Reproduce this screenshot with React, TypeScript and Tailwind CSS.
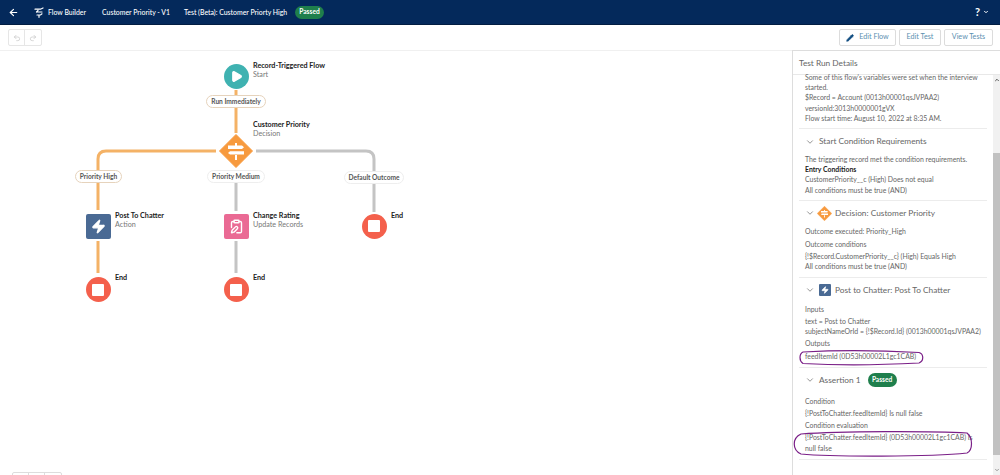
import React from "react";
import { ArrowLeft, Undo2, Redo2, ChevronDown, Pencil, Zap, Play, ClipboardPen, ChevronUp } from "lucide-react";

const Pill = ({ c, t, x, y, w }: { c: string; t: string; x: number; y: number; w: number }) => (
  <div
    className={`absolute h-[13px] rounded-full border bg-white flex items-center justify-center whitespace-nowrap text-[6.6px] font-bold text-[#555] ${c}`}
    style={{ left: x, top: y, width: w }}
  >
    {t}
  </div>
);

const Label = ({ x, y, t, s }: { x: number; y: number; t: string; s?: string }) => (
  <div className="absolute leading-[8.5px]" style={{ left: x, top: y + 1 }}>
    <div className="text-[7.2px] font-bold text-[#222] whitespace-nowrap">{t}</div>
    {s && <div className="text-[7.2px] text-[#777] whitespace-nowrap">{s}</div>}
  </div>
);

const EndNode = ({ x, y }: { x: number; y: number }) => (
  <div
    className="absolute w-[25px] h-[25px] rounded-full bg-[#f4604c] flex items-center justify-center"
    style={{ left: x - 12.5, top: y - 12.5 }}
  >
    <div className="w-[12px] h-[12px] rounded-[1px] bg-white" />
  </div>
);

const Section = ({ icon, title, extra, children }: { icon?: React.ReactNode; title: string; extra?: React.ReactNode; children: React.ReactNode }) => (
  <div className="border-b border-[#ececec]">
    <div className="h-[25px] flex items-center pl-[6px] gap-[3px]">
      <ChevronDown size={10} strokeWidth={1.5} className="text-[#555] shrink-0" />
      {icon}
      <span className="text-[8.3px] text-[#666] ml-[1px] whitespace-nowrap">{title}</span>
      {extra}
    </div>
    <div className="pl-[6px] pb-[5px]">{children}</div>
  </div>
);

const L = ({ children, b, mt }: { children: React.ReactNode; b?: boolean; mt?: string }) => (
  <div className={`leading-[10.2px] whitespace-nowrap ${b ? "font-bold text-[#222]" : ""} ${mt ?? ""}`}>{children}</div>
);

const PassedPill = () => (
  <span className="h-[14px] w-[29px] rounded-full bg-[#1f7f4c] text-white text-[6.6px] font-bold flex items-center justify-center shrink-0">
    Passed
  </span>
);

const DecisionIcon = ({ s }: { s: number }) => (
  <svg width={s} height={s} viewBox="0 0 34 34" className="shrink-0">
    <path d="M17 0.5 L33.5 17 L17 33.5 L0.5 17 Z" fill="#f79a3e" stroke="#f79a3e" strokeLinejoin="round" strokeWidth="1" />
    <path d="M9 11.5h14l2 1.7-2 1.7H9zM25 17.2H11l-2 1.7 2 1.7h14z" fill="#fff" />
    <path d="M16 9h2v3h-2zM16 21h2v5h-2z" fill="#fff" />
  </svg>
);

export default function App() {
  return (
    <div className="w-[1000px] h-[475px] overflow-hidden bg-white flex flex-col font-['Lato','Open_Sans',sans-serif] text-[#555]">
      <header className="h-[25px] shrink-0 bg-[#04295b] border-b border-[#021d42] flex items-center text-white text-[6.9px] font-medium">
        <div className="w-[26px] flex justify-center"><ArrowLeft size={11} strokeWidth={2.5} /></div>
        <div className="flex items-center gap-[4px] pl-[8px] w-[68px]">
          <svg width="10" height="11" viewBox="0 0 10 11" fill="none" stroke="#fff" strokeWidth="1.2" strokeLinecap="round" className="shrink-0">
            <path d="M1 2.2h5.5L9 1M2.5 5h5.5M2.5 5L4 3.5M3 8h3.5L8 6.8M5 8.5v1.8" />
          </svg>
          <span className="whitespace-nowrap">Flow Builder</span>
        </div>
        <span className="ml-[8px] w-[82px] whitespace-nowrap">Customer Priority - V1</span>
        <span className="w-[111px] whitespace-nowrap">Test (Beta): Customer Priorty High</span>
        <span className="h-[13px] w-[29px] rounded-full bg-[#1f7f4c] text-[6.6px] font-bold flex items-center justify-center">Passed</span>
        <div className="ml-auto mr-[11px] flex items-center gap-[3px]">
          <span className="text-[11px] font-bold">?</span>
          <ChevronDown size={6} strokeWidth={4} />
        </div>
      </header>

      <div className="h-[26px] shrink-0 border-b border-[#f0f0f0] flex items-center pl-[8px] pr-[7px] text-[7.2px] text-[#5b8fb0]">
        <div className="flex h-[17px] border border-[#e6e6e6] rounded-[2px] text-[#c4c4c4]">
          <div className="w-[16px] flex items-center justify-center border-r border-[#e6e6e6]"><Undo2 size={8} /></div>
          <div className="w-[16px] flex items-center justify-center"><Redo2 size={8} /></div>
        </div>
        <div className="ml-auto flex gap-[3px]">
          <div className="w-[57px] h-[17px] border border-[#dcdcdc] rounded-[2px] flex items-center justify-center gap-[5px]">
            <Pencil size={8} fill="#0f4c81" className="text-[#0f4c81]" />
            <span>Edit Flow</span>
          </div>
          <div className="w-[42px] h-[17px] border border-[#dcdcdc] rounded-[2px] flex items-center justify-center">Edit Test</div>
          <div className="w-[49px] h-[17px] border border-[#dcdcdc] rounded-[2px] flex items-center justify-center">View Tests</div>
        </div>
      </div>

      <div className="flex-1 min-h-0 flex">
        <main className="relative flex-1 min-w-0">
          <svg width="792" height="424" viewBox="0 51 792 424" fill="none" strokeWidth="3" className="absolute left-0 top-0">
            <path d="M236 90V133" stroke="#f4b266" />
            <path d="M216 151H106Q98 151 98 159V210M98 241V273" stroke="#f4b266" />
            <path d="M236 183V211M236 241V273" stroke="#c4c4c4" />
            <path d="M256 151H366Q374 151 374 159V212" stroke="#c4c4c4" />
          </svg>

          <div className="absolute left-[223.5px] top-[12.5px] w-[25px] h-[25px] rounded-full bg-[#3fb2b1] flex items-center justify-center">
            <Play size={13} fill="#fff" className="text-white ml-[1px]" />
          </div>
          <Label x={253} y={10} t="Record-Triggered Flow" s="Start" />
          <Pill c="border-[#e6d3bc]" t="Run Immediately" x={206} y={44} w={60} />
          <Label x={253} y={69} t="Customer Priority" s="Decision" />
          <div className="absolute left-[219px] top-[83px]"><DecisionIcon s={34} /></div>

          <Pill c="border-[#e6d3bc]" t="Priority High" x={75} y={119} w={47} />
          <Pill c="border-[#eeeeee]" t="Priority Medium" x={207} y={119} w={58} />
          <Pill c="border-[#eeeeee]" t="Default Outcome" x={344} y={120} w={60} />

          <div className="absolute left-[86px] top-[163px] w-[25px] h-[25px] rounded-[2px] bg-[#4a6a94] flex items-center justify-center">
            <Zap size={15} fill="#fff" className="text-white" />
          </div>
          <Label x={115} y={160} t="Post To Chatter" s="Action" />

          <div className="absolute left-[224px] top-[163px] w-[25px] h-[25px] rounded-[2px] bg-[#ea6a94] flex items-center justify-center">
            <ClipboardPen size={15} strokeWidth={2.2} className="text-white" />
          </div>
          <Label x={253} y={160} t="Change Rating" s="Update Records" />

          <EndNode x={374} y={175} />
          <Label x={391} y={160} t="End" />
          <EndNode x={98} y={238.5} />
          <Label x={115} y={222} t="End" />
          <EndNode x={236} y={238.5} />
          <Label x={253} y={222} t="End" />

          <div className="absolute left-[12px] bottom-[-6px] h-[9px] flex border border-[#dddddd] rounded-[2px]">
            <div className="w-[16px] border-r border-[#dddddd]" />
            <div className="w-[16px] border-r border-[#dddddd]" />
            <div className="w-[16px]" />
          </div>
        </main>

        <aside className="relative w-[208px] shrink-0 border-l border-t border-[#dddddd] flex flex-col -mt-[1px]">
          <div className="h-[24px] shrink-0 border-b border-[#e8e8e8] pl-[6px] pt-[7px] text-[8.3px] leading-[11px] text-[#666]">Test Run Details</div>
          <div className="flex-1 min-h-0 flex">
            <div className="flex-1 min-w-0 text-[6.9px] text-[#666] pl-[6px] pr-[6px]">
              <div className="pl-[6px] pb-[5px] border-b border-[#ececec] -mt-[3px]">
                <L>Some of this flow's variables were set when the interview</L>
                <L>started.</L>
                <L>$Record = Account (0013h00001qsJVPAA2)</L>
                <L>versionId:3013h0000001gVX</L>
                <L>Flow start time: August 10, 2022 at 8:35 AM.</L>
              </div>
              <Section title="Start Condition Requirements">
                <L>The triggering record met the condition requirements.</L>
                <L b>Entry Conditions</L>
                <L>CustomerPriority__c (High) Does not equal</L>
                <L>All conditions must be true (AND)</L>
              </Section>
              <Section title="Decision: Customer Priority" icon={<span className="-ml-[1px] -mr-[1px]"><DecisionIcon s={15} /></span>}>
                <L>Outcome executed: Priority_High</L>
                <L mt="mt-[3px]">Outcome conditions</L>
                <L mt="mt-[2px]">{"{!$Record.CustomerPriority__c} (High) Equals High"}</L>
                <L>All conditions must be true (AND)</L>
              </Section>
              <Section
                title="Post to Chatter: Post To Chatter"
                icon={
                  <span className="w-[12px] h-[12px] rounded-[1px] bg-[#4a6a94] flex items-center justify-center shrink-0 ml-[1px]">
                    <Zap size={8} fill="#fff" className="text-white" />
                  </span>
                }
              >
                <L mt="mt-[1px]">Inputs</L>
                <L mt="mt-[2px]">text = Post to Chatter</L>
                <L>{"subjectNameOrId = {!$Record.Id} (0013h00001qsJVPAA2)"}</L>
                <L mt="mt-[2px]">Outputs</L>
                <L mt="mt-[3px]">feedItemId (0D53h00002L1gc1CAB)</L>
              </Section>
              <Section title="Assertion 1" extra={<span className="ml-[4px]"><PassedPill /></span>}>
                <L mt="mt-[3px]">Condition</L>
                <L mt="mt-[2px]">{"{!PostToChatter.feedItemId} Is null false"}</L>
                <L mt="mt-[2px]">Condition evaluation</L>
                <L mt="mt-[2px]">{"{!PostToChatter.feedItemId} (0D53h00002L1gc1CAB) Is"}</L>
                <L mt="mt-[1px]">null false</L>
              </Section>
            </div>
            <div className="w-[7px] shrink-0 bg-[#f1f1f1] flex flex-col items-center text-[#555]">
              <ChevronUp size={6} strokeWidth={4} className="mt-[2px]" />
              <div className="w-full h-[302px] mt-[70px] bg-[#c1c1c1]" />
              <ChevronDown size={6} strokeWidth={4} className="mt-auto mb-[2px] text-[#999]" />
            </div>
          </div>
          <svg width="208" height="425" viewBox="792 50 208 425" fill="none" stroke="#7a1f87" strokeWidth="1.2" className="absolute left-0 top-0 pointer-events-none">
            <path d="M802 351C840 349 890 350 918 351.5C923 353 923 360 918 362C880 364 830 364 802 362.5C798 360 798 353 802 351Z" />
            <path d="M800 433C840 430 930 430 966 432C972 437 972 449 966 452C930 456 830 456 800 453C791 449 791 437 800 433Z" />
          </svg>
        </aside>
      </div>
    </div>
  );
}
